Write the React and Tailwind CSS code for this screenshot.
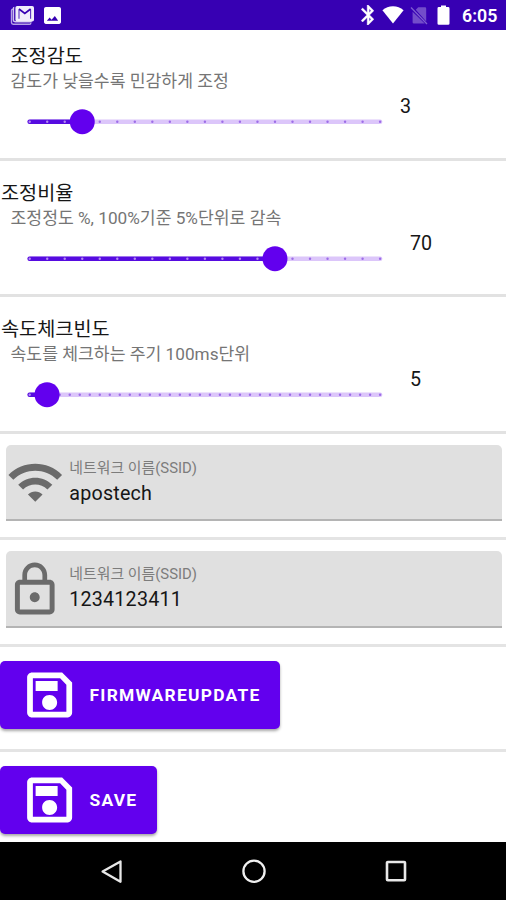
const FONT = "font-['Roboto','Noto_Sans_CJK_KR',sans-serif]";

function StatusBar() {
  return (
    <header className="flex h-[29.5px] shrink-0 items-start bg-[#3700b3] text-white">
      <svg className="ml-[10px] mt-[5px] h-5 w-[26px]" viewBox="0 0 26 20">
        <path d="M3.3 4.2H2.7q-1.2 0-1.2 1.5v11.8q0 1.7 1.7 1.7h16.4q1.2 0 1.2-1.2" fill="none" stroke="#b5a1e6" strokeWidth="1.4" />
        <path d="M4.3 2.6q-.9 0-.9 1.3v11.2q0 1.7 1.7 1.7h16.6" fill="none" stroke="#cfc2ee" strokeWidth="1.5" />
        <rect x="5.4" y="1" width="18.6" height="15.6" rx="1.8" fill="#f1edfb" />
        <path d="M9 13.800V4.600M20.600 4.600v9.200" fill="none" stroke="#5a30c0" strokeWidth="1.100" />
        <path d="M9 4l5.800 4.400L20.600 4" fill="none" stroke="#3700b3" strokeWidth="1.700" />
      </svg>
      <svg className="ml-[8px] mt-[6.5px] h-[17px] w-[17px]" viewBox="3 3 18 18" fill="#fff">
        <path d="M21 19V5c0-1.1-.9-2-2-2H5c-1.1 0-2 .9-2 2v14c0 1.1.9 2 2 2h14c1.1 0 2-.9 2-2zM9 14l2 2.500L14.500 12.500l3.500 5H6z" />
      </svg>
      <svg className="ml-[300px] mt-[5px] h-[20px] w-[13px]" viewBox="4.8 2 13 20" fill="#fff" stroke="#fff" strokeWidth=".4">
        <path d="M17.71 7.710L12 2h-1v7.590L6.410 5 5 6.410 10.590 12 5 17.590 6.410 19 11 14.410V22h1l5.710-5.710-4.300-4.290 4.300-4.290zM13 5.830l1.880 1.880L13 9.590V5.830zm1.880 10.460L13 18.170v-3.760l1.880 1.880z" />
      </svg>
      <svg className="ml-[7.500px] mt-[6px] h-[18px] w-[22px]" viewBox="0 0 22 18" fill="#fff">
        <path d="M11 17.600L.4 4.200Q5 .3 11 .3T21.600 4.200z" />
      </svg>
      <svg className="ml-[6.500px] mt-[6px] h-[19px] w-[18px]" viewBox="0 0 18 19">
        <path d="M16.200 15.500V2.500q0-1.200-1.200-1.200H8.200L5.800 3.700zM2.600 5.800v10.400q0 1.300 1.300 1.300h10.900z" fill="#734dca" />
        <path d="M1 1.500l16 16.500" stroke="#7f5dcf" strokeWidth="1.300" />
      </svg>
      <svg className="ml-[9px] mt-[5px] h-5 w-[13px]" viewBox="0 0 13 20" fill="#fff">
        <path d="M4 .6h5v1.500h2.200q1.300 0 1.300 1.300v15q0 1.300-1.300 1.300H1.800Q.5 19.700.5 18.400V3.400q0-1.300 1.300-1.300H4z" />
      </svg>
      <span className="ml-[12px] mt-[6px] text-[17.800px] font-semibold leading-5">6:05</span>
    </header>
  );
}

function Slider({ value, max, intervals }) {
  const start = 1.7;
  const length = 350.4;
  const thumb = start + (value / max) * length;
  const ticks = Array.from({ length: intervals + 1 }, (_, i) => start + (i * length) / intervals);
  return (
    <svg className="h-[26px] w-[356px] overflow-visible" viewBox="0 0 356 26">
      <path d={`M${start} 12.700H${start + length}`} stroke="#dcc6fa" strokeWidth="4.600" strokeLinecap="round" />
      <path d={`M${start} 12.700H${thumb}`} stroke="#560be0" strokeWidth="4.600" strokeLinecap="round" />
      {ticks.map((x) => (
        <circle key={x} cx={x} cy="12.700" r="1.200" fill={x < thumb ? "#b48cf0" : "#9d6ce8"} />
      ))}
      <circle cx={thumb} cy="12.700" r="12.500" fill="#6200ee" />
    </svg>
  );
}

function Setting({ title, titleClass, note, value, valueClass, max, intervals }) {
  return (
    <section className="flex h-[136.500px] shrink-0 border-b-[3px] border-[#e2e2e2] pt-[20px]">
      <div className="flex w-[400px] shrink-0 flex-col">
        <h2 className={`whitespace-nowrap text-[19.700px] leading-[26px] text-[#161616] ${titleClass}`}>{title}</h2>
        <p className="whitespace-nowrap pl-[10.500px] text-[17.200px] leading-[22px] text-[#757575]">{note}</p>
        <div className="ml-[28px] mt-[17px] flex">
          <Slider value={value} max={max} intervals={intervals} />
        </div>
      </div>
      <span className={`mt-[50px] text-[19.700px] leading-[26px] text-[#161616] ${valueClass}`}>{value}</span>
    </section>
  );
}

function Field({ label, value, icon, iconClass }) {
  return (
    <section className="h-[106.800px] shrink-0 border-b-[3px] border-[#e4e4e4] pl-[5.500px] pr-[4.500px] pt-[11px]">
      <div className="flex h-[76.500px] rounded-t-[5px] border-b-[2.500px] border-[#b4b4b4] bg-[#e0e0e0]">
        <div className="w-[63.800px] shrink-0">
          <svg className={iconClass} viewBox="0 0 24 24" fill="#6b6b6b">
            <path d={icon} />
          </svg>
        </div>
        <div className="flex flex-col pt-[12px]">
          <span className="whitespace-nowrap text-[14.900px] leading-[22px] text-[#7c7c7c]">{label}</span>
          <span className="mt-[2px] text-[19.700px] leading-[26px] tracking-[0.200px] text-[#161616]">{value}</span>
        </div>
      </div>
    </section>
  );
}

function SaveButton({ children, widthClass }) {
  return (
    <button className={`flex h-[68.700px] items-center rounded-[5px] bg-[#6200ee] pl-[19px] text-white shadow-[0_2px_3px_rgba(0,0,0,0.350)] ${widthClass}`}>
      <svg className="h-[60px] w-[60px] shrink-0" viewBox="-0.250 0 24 24" fill="#fff">
        <path d="M17 3H5c-1.110 0-2 .9-2 2v14c0 1.100.890 2 2 2h14c1.100 0 2-.9 2-2V7l-4-4zm1.700 15.700H5.300V5.300h10.900L18.700 7.900V18.700zm-6.700-6.700c-1.900 0-3 1.340-3 3s1.340 3 3 3 3-1.340 3-3-1.340-3-3-3zM6.400 6.400h8.800v4H6.400V6.400z" />
      </svg>
      <span className="ml-[10.500px] text-[17.400px] font-bold leading-6 tracking-[1.250px]">{children}</span>
    </button>
  );
}

function NavBar() {
  return (
    <nav className="flex min-h-0 flex-1 items-start bg-black pt-[17px]">
      <svg className="ml-[100px] h-[26px] w-[24px]" viewBox="0 0 24 26">
        <path d="M20.500 2.400v20.400L2.600 12.600z" fill="none" stroke="#e8e8e8" strokeWidth="2.300" strokeLinejoin="round" />
      </svg>
      <svg className="ml-[117px] h-[26px] w-[26px]" viewBox="0 0 26 26">
        <circle cx="13" cy="12.300" r="10.600" fill="none" stroke="#f0f0f0" strokeWidth="2.300" />
      </svg>
      <svg className="ml-[116px] h-[26px] w-[26px]" viewBox="0 0 26 26">
        <rect x="4" y="3" width="18" height="18.300" rx=".8" fill="none" stroke="#e8e8e8" strokeWidth="2.600" />
      </svg>
    </nav>
  );
}

const WIFI =
  "M1 9l2 2c4.970-4.970 13.030-4.970 18 0l2-2C16.930 2.930 7.080 2.930 1 9zm8 8l3 3 3-3c-1.650-1.660-4.340-1.660-6 0zm-4-4l2 2c2.760-2.760 7.240-2.760 10 0l2-2C15.140 9.140 8.870 9.140 5 13z";
const LOCK =
  "M12 17c1.100 0 2-.9 2-2s-.9-2-2-2-2 .9-2 2 .9 2 2 2zm6-9h-1V6c0-2.760-2.240-5-5-5S7 3.240 7 6v2H6c-1.100 0-2 .9-2 2v10c0 1.100.9 2 2 2h12c1.100 0 2-.9 2-2V10c0-1.100-.9-2-2-2zM8.900 6c0-1.710 1.390-3.100 3.100-3.100s3.100 1.390 3.100 3.100v2H8.900V6zM18 20H6V10h12v10z";

export default function App() {
  return (
    <div className={`flex h-[900px] w-[506px] flex-col overflow-hidden bg-white ${FONT}`}>
      <StatusBar />
      <main className="flex h-[812px] shrink-0 flex-col">
        <div className="-mt-[5.500px] flex flex-col">
          <Setting title="조정감도" titleClass="pl-[10.500px]" note="감도가 낮을수록 민감하게 조정" value={3} valueClass="" max={20} intervals={20} />
          <Setting title="조정비율" titleClass="pl-[1px]" note="조정정도 %, 100%기준 5%단위로 감속" value={70} valueClass="pl-[10px]" max={100} intervals={20} />
          <Setting title="속도체크빈도" titleClass="pl-[1px]" note="속도를 체크하는 주기 100ms단위" value={5} valueClass="pl-[10px]" max={101} intervals={35} />
          <Field label="네트워크 이름(SSID)" value="apostech" icon={WIFI} iconClass="mt-[8px] h-[58.500px] w-[58.500px]" />
          <Field label="네트워크 이름(SSID)" value="1234123411" icon={LOCK} iconClass="-ml-[0.800px] mt-[8.500px] h-[59.500px] w-[59.500px]" />
          <section className="h-[105px] border-b-[3px] border-[#e4e4e4] pt-[13.700px]">
            <SaveButton widthClass="w-[280px]">FIRMWAREUPDATE</SaveButton>
          </section>
          <section className="pt-[13.500px]">
            <SaveButton widthClass="w-[157px]">SAVE</SaveButton>
          </section>
        </div>
      </main>
      <NavBar />
    </div>
  );
}
